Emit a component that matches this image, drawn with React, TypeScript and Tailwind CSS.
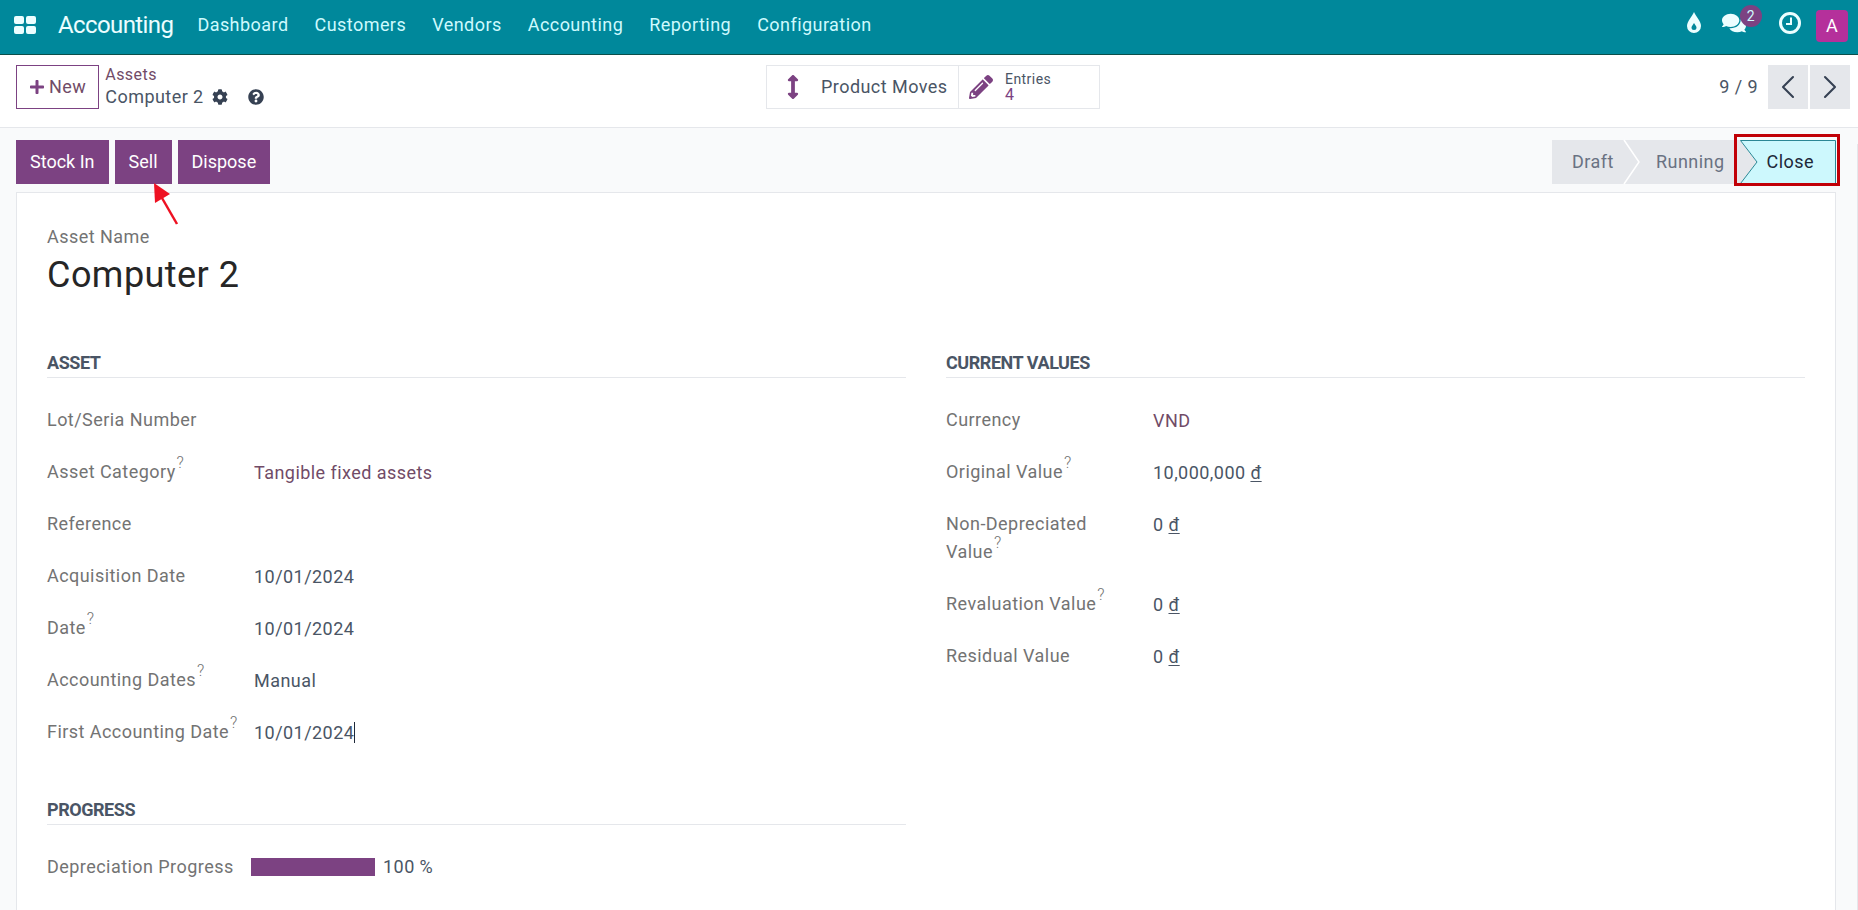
import { FaComments, FaCog, FaQuestionCircle, FaPlus, FaPencilAlt, FaArrowsAltV } from 'react-icons/fa';
import { ChevronLeft, ChevronRight } from 'lucide-react';

const menu = ['Dashboard', 'Customers', 'Vendors', 'Accounting', 'Reporting', 'Configuration'];

function Hint() {
  return <sup className="ml-px -top-2.5 text-base/none font-light">?</sup>;
}

function Row({ label, hint, children, tall }: { label: string; hint?: boolean; children?: React.ReactNode; tall?: boolean }) {
  return (
    <div className={`flex items-start ${tall ? 'h-20' : 'h-13'}`}>
      <div className="w-51.5 shrink-0 pr-3 text-neutral-500 leading-7">
        {label}
        {hint && <Hint />}
      </div>
      <div className="pl-px pt-px text-gray-600 leading-7">{children}</div>
    </div>
  );
}

function Dong() {
  return <span className="underline underline-offset-2">đ</span>;
}

function SectionTitle({ children }: { children: string }) {
  return <div className="border-b border-gray-200 pb-0.5 mb-7 font-bold text-gray-600 leading-6 tracking-tight">{children}</div>;
}

export default function App() {
  return (
    <div className="relative flex h-screen flex-col overflow-hidden bg-gray-50 text-lg tracking-wide font-['Roboto',sans-serif]">
      {/* navbar */}
      <header className="flex items-center border-b border-teal-900 bg-[#00889b] pl-3.5 pr-2.5 pt-2.5 pb-3 text-cyan-100">
        <div className="-mt-0.5 flex items-center">
          <div className="grid w-5.5 grid-cols-2 gap-0.5">
            <span className="h-2 rounded-xs bg-cyan-50" />
            <span className="h-2 rounded-xs bg-cyan-50" />
            <span className="h-2 rounded-xs bg-cyan-50" />
            <span className="h-2 rounded-xs bg-cyan-50" />
          </div>
          <div className="ml-5.5 mr-6 text-2xl tracking-tight text-cyan-50">Accounting</div>
          <nav className="flex gap-6.5">
            {menu.map((m) => (
              <span key={m}>{m}</span>
            ))}
          </nav>
        </div>
        <div className="ml-auto flex items-center">
          <div className="-mt-1.5 flex items-center text-cyan-50">
            <svg viewBox="0 0 16 22" className="h-5.5 w-4">
              <path d="M8 0C10 5 15 9 15 14A7 7 0 0 1 1 14C1 9 6 5 8 0Z" fill="currentColor" />
              <path d="M8 11C9 13 10.500 14 10.500 15.500A2.500 2.500 0 0 1 5.500 15.500C5.500 14 7 13 8 11Z" fill="#00889b" />
            </svg>
            <div className="relative ml-5 mr-7">
              <FaComments className="h-6 w-6" />
              <span className="absolute -right-4 -top-1.5 flex h-5.5 w-5.5 items-center justify-center rounded-full bg-[#7c4282] text-sm text-cyan-100">2</span>
            </div>
            <svg viewBox="0 0 24 24" className="ml-1 h-6 w-6">
              <circle cx="12" cy="12" r="9.500" fill="none" stroke="currentColor" strokeWidth="3" />
              <path d="M13 6.500V13H8" fill="none" stroke="currentColor" strokeWidth="2" />
            </svg>
          </div>
          <div className="ml-3.5 flex h-8 w-8 items-center justify-center rounded bg-[#b5309b] text-white">A</div>
        </div>
      </header>

      {/* control panel */}
      <div className="flex items-start border-b border-gray-200 bg-white pl-4 pr-2 pt-2.5 pb-4.5">
        <div className="flex flex-1 items-start gap-1.5">
          <button className="flex h-11 items-center gap-1 border border-[#7c4282] px-3 text-[#714b67]">
            <FaPlus className="h-4 w-4 text-[#7c4282]" />
            New
          </button>
          <div>
            <div className="text-base leading-5 text-[#714b67]">Assets</div>
            <div className="flex items-center leading-6 text-gray-600">
              Computer 2
              <FaCog className="ml-2 h-4 w-4 text-gray-700" />
              <FaQuestionCircle className="ml-5 h-4 w-4 text-gray-700" />
            </div>
          </div>
        </div>
        <div className="flex h-11 border border-gray-200">
          <div className="flex w-48 items-center border-r border-gray-200 pl-5">
            <FaArrowsAltV className="h-7 w-3 text-[#7c4282]" />
            <span className="ml-5.5 text-gray-600">Product Moves</span>
          </div>
          <div className="flex w-35 items-center pl-2.5">
            <FaPencilAlt className="h-6 w-6 text-[#7c4282]" />
            <div className="ml-3 text-sm leading-4 text-gray-600">
              <div>Entries</div>
              <div className="text-base leading-4 text-[#7c4282]">4</div>
            </div>
          </div>
        </div>
        <div className="flex flex-1 items-center justify-end">
          <span className="mr-2.5 text-gray-600">9 / 9</span>
          <div className="flex gap-0.5">
            <button className="flex h-11 w-10 items-center justify-center bg-gray-200 text-gray-700">
              <ChevronLeft className="h-10 w-10" strokeWidth={1.25} />
            </button>
            <button className="flex h-11 w-10 items-center justify-center bg-gray-200 text-gray-700">
              <ChevronRight className="h-10 w-10" strokeWidth={1.25} />
            </button>
          </div>
        </div>
      </div>

      {/* status row */}
      <div className="flex items-center justify-between pl-4 pr-5.5 pt-3 pb-2">
        <div className="flex gap-1.5 tracking-normal">
          <button className="flex h-11 items-center bg-[#7c4282] px-3.5 text-white">Stock In</button>
          <button className="flex h-11 items-center bg-[#7c4282] px-3.5 text-white">Sell</button>
          <button className="flex h-11 items-center bg-[#7c4282] px-3.5 text-white">Dispose</button>
        </div>
        <div className="flex h-11 text-gray-500">
          <div className="relative flex w-20 items-center bg-gray-200 pl-5">
            Draft
            <svg viewBox="0 0 16 44" className="absolute -right-2 top-0 h-11 w-4 overflow-visible">
              <path d="M0 0L15 22L0 44" fill="none" stroke="white" strokeWidth="1.500" />
            </svg>
          </div>
          <div className="flex w-27 items-center bg-gray-200 pl-6">Running</div>
          <div className="relative flex w-24 items-center justify-end pr-5.5 text-gray-800">
            <svg viewBox="0 0 96 44" className="absolute inset-0 h-11 w-24">
              <path d="M0 0L17 22L0 44Z" fill="#e5e7eb" />
              <path d="M0.500 0.500H95.500V43.500H0.500L17 22Z" fill="#cdf8fd" stroke="#2b8795" />
            </svg>
            <span className="relative">Close</span>
          </div>
        </div>
      </div>

      {/* sheet */}
      <main className="mx-4 mr-5.5 flex-1 border border-b-0 border-gray-200 bg-white px-7.5 pt-8">
        <div className="leading-6 text-neutral-500">Asset Name</div>
        <h1 className="mt-1.5 text-4xl leading-10 text-neutral-800">Computer 2</h1>

        <div className="mt-14 grid grid-cols-2 gap-10">
          <div>
            <SectionTitle>ASSET</SectionTitle>
            <Row label="Lot/Seria Number" />
            <Row label="Asset Category" hint>
              <span className="text-[#714b67]">Tangible fixed assets</span>
            </Row>
            <Row label="Reference" />
            <Row label="Acquisition Date">10/01/2024</Row>
            <Row label="Date" hint>10/01/2024</Row>
            <Row label="Accounting Dates" hint>Manual</Row>
            <Row label="First Accounting Date" hint>
              <span className="border-r border-gray-800">10/01/2024</span>
            </Row>
            <div className="mt-7">
              <SectionTitle>PROGRESS</SectionTitle>
            </div>
            <div className="mt-1 flex items-center text-neutral-500">
              <div className="w-51.5 shrink-0 leading-7">Depreciation Progress</div>
              <div className="h-4.5 w-31 -ml-0.5 bg-[#7c4282]" />
              <span className="ml-2 text-gray-600">100 %</span>
            </div>
          </div>
          <div>
            <SectionTitle>CURRENT VALUES</SectionTitle>
            <Row label="Currency">
              <span className="text-[#714b67]">VND</span>
            </Row>
            <Row label="Original Value" hint>10,000,000 <Dong /></Row>
            <Row label="Non-Depreciated Value" hint tall>0 <Dong /></Row>
            <Row label="Revaluation Value" hint>0 <Dong /></Row>
            <Row label="Residual Value">0 <Dong /></Row>
          </div>
        </div>
      </main>

      {/* scrollbar edge */}
      <div className="absolute right-0 top-36 bottom-0 w-px bg-gray-200" />

      {/* annotation */}
      <div className="pointer-events-none absolute right-4.5 top-33.5 h-13 w-26.5 border-3 border-red-700" />
      <svg viewBox="0 0 30 48" className="pointer-events-none absolute left-38 top-45.5 h-12 w-7.5">
        <path d="M25 42L10 16" stroke="#ee1122" strokeWidth="2.500" />
        <path d="M2 1L18 12L3 21Z" fill="#ee1122" />
      </svg>
    </div>
  );
}
